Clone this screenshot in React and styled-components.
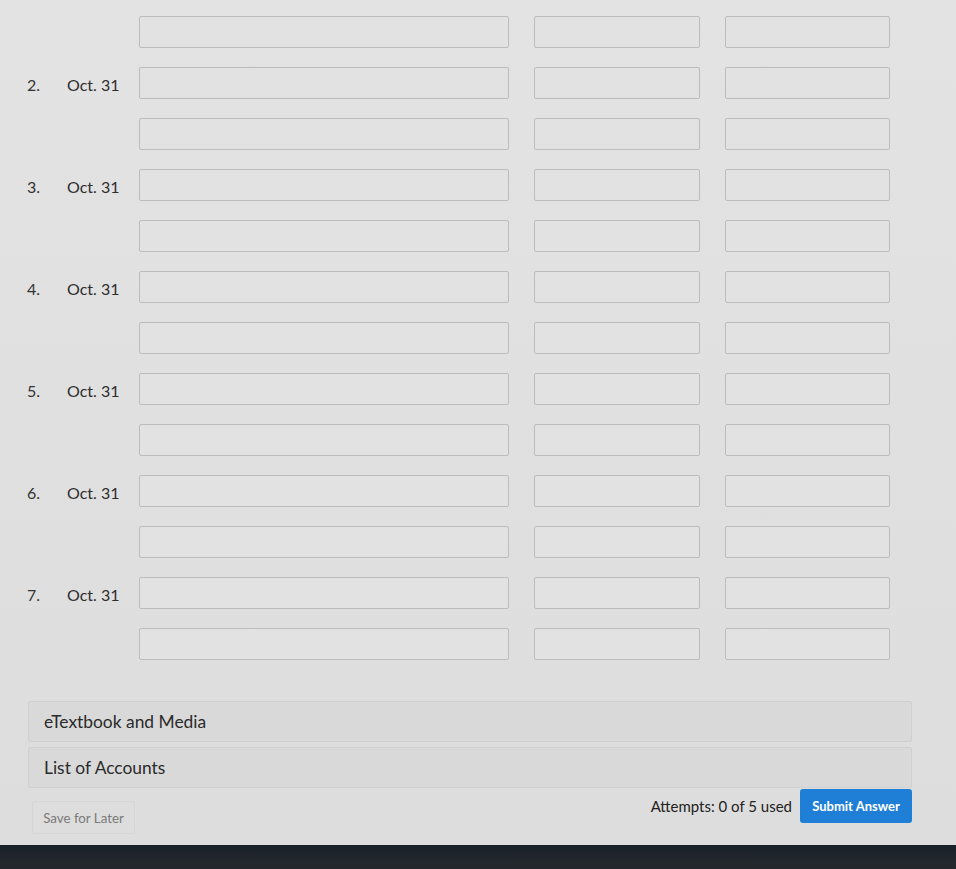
import styled, { createGlobalStyle } from "styled-components";

const GlobalStyle = createGlobalStyle`
  html, body {
    margin: 0;
    padding: 0;
    background: #e0e0e0;
    font-family: Lato, "Open Sans", "Liberation Sans", sans-serif;
  }
`;

const entries = [
  { num: "", label: "" },
  { num: "2.", label: "Oct. 31" },
  { num: "", label: "" },
  { num: "3.", label: "Oct. 31" },
  { num: "", label: "" },
  { num: "4.", label: "Oct. 31" },
  { num: "", label: "" },
  { num: "5.", label: "Oct. 31" },
  { num: "", label: "" },
  { num: "6.", label: "Oct. 31" },
  { num: "", label: "" },
  { num: "7.", label: "Oct. 31" },
  { num: "", label: "" },
];

function App() {
  return (
    <>
      <GlobalStyle />
      <Page>
        <Table>
          {entries.map((e, i) => (
            <Row key={i}>
              <Num>{e.num}</Num>
              <Label>{e.label}</Label>
              <Field $w={370} />
              <Field $w={166} />
              <Field $w={165} />
            </Row>
          ))}
        </Table>

        <Panels>
          <Panel>eTextbook and Media</Panel>
          <Panel>List of Accounts</Panel>
        </Panels>

        <Footer>
          <SaveButton>Save for Later</SaveButton>
          <Right>
            <Attempts>Attempts: 0 of 5 used</Attempts>
            <SubmitButton>Submit Answer</SubmitButton>
          </Right>
        </Footer>
      </Page>
      <Bezel />
    </>
  );
}

const Page = styled.div`
  height: 845px;
  box-sizing: border-box;
  padding-top: 16px;
  background: linear-gradient(#e3e3e3, #dddddd);
`;

const Table = styled.div`
  display: flex;
  flex-direction: column;
  gap: 19px;
  padding-left: 27px;
`;

const Row = styled.div`
  display: flex;
  align-items: center;
  height: 32px;
`;

const Num = styled.div`
  width: 40px;
  font-size: 16px;
  color: #333;
  margin-top: 2px;
`;

const Label = styled.div`
  width: 72px;
  font-size: 16px;
  color: #2e2e2e;
  margin-top: 2px;
`;

const Field = styled.div`
  width: ${(p) => p.$w}px;
  height: 32px;
  box-sizing: border-box;
  border: 1px solid #bcbcbc;
  border-radius: 2px;
  background: #e2e2e2;
  margin-right: 25px;
`;

const Panels = styled.div`
  display: flex;
  flex-direction: column;
  gap: 5px;
  margin: 41px 44px 0 28px;
`;

const Panel = styled.div`
  height: 41px;
  box-sizing: border-box;
  display: flex;
  align-items: center;
  padding-left: 15px;
  background: #d9d9d9;
  border: 1px solid #d0d0d0;
  border-radius: 2px;
  font-size: 17.4px;
  color: #2a2a2a;
`;

const Footer = styled.div`
  display: flex;
  justify-content: space-between;
  align-items: flex-start;
  margin: 1px 44px 0 32px;
`;

const SaveButton = styled.div`
  margin-top: 12px;
  width: 103px;
  height: 33px;
  box-sizing: border-box;
  display: flex;
  align-items: center;
  justify-content: center;
  border: 1px solid #d6d6d6;
  border-radius: 2px;
  font-size: 13.3px;
  color: #7a7a7a;
`;

const Right = styled.div`
  display: flex;
  align-items: center;
  gap: 8px;
`;

const Attempts = styled.div`
  font-size: 15px;
  color: #222;
  margin-top: -1px;
`;

const SubmitButton = styled.div`
  width: 112px;
  height: 34px;
  display: flex;
  align-items: center;
  justify-content: center;
  background: #1f7fd6;
  border-radius: 3px;
  color: #fff;
  font-size: 13px;
  font-weight: 700;
`;

const Bezel = styled.div`
  height: 24px;
  background: linear-gradient(#1a2029, #262a2e);
`;

export default App;
